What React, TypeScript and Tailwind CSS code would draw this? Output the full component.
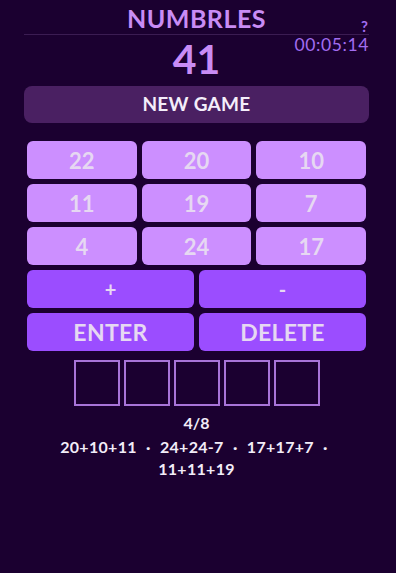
import React from "react";

const numbers = [22, 20, 10, 11, 19, 7, 4, 24, 17];
const solutions = ["20+10+11", "24+24-7", "17+17+7", "11+11+19"];

const App = () => {
    return (
        <main
            className="min-h-[573px] w-full bg-[#1b0030] text-white"
            style={{ fontFamily: "Lato, 'Open Sans', sans-serif" }}
        >
            <div className="ml-6 w-[345px] pt-[3px]">
                {/* header */}
                <div className="relative border-b border-[#3b1c52] pb-[1px]">
                    <h1 className="text-center text-[25px] font-bold leading-[30px] tracking-[0.5px] text-[#c98cf5]">
                        NUMBRLES
                    </h1>
                    <span className="absolute right-[1px] top-[15px] text-[15px] font-bold leading-4 text-[#a26df0]">?</span>
                </div>
                <div className="relative">
                    <div className="text-center text-[41px] font-bold leading-[48px] text-[#c98cf5]">41</div>
                    <span className="absolute right-0 top-[0px] text-[17.5px] leading-5 tracking-[0.6px] text-[#a26df0]">00:05:14</span>
                </div>
                <button className="mt-[3px] flex h-[37px] w-full items-center justify-center rounded-lg bg-[#4a2062] text-[19px] font-bold tracking-[0.3px] text-[#f4eefa]">
                    NEW GAME
                </button>

                {/* number tiles */}
                <div className="ml-[3px] mt-[18px] w-[339px]">
                    <div className="grid grid-cols-3 gap-x-[5px] gap-y-[5px]">
                        {numbers.map((n, i) => (
                            <button
                                key={i}
                                className="flex h-[38px] items-center justify-center rounded-[6px] bg-[#cc8fff] text-[22px] font-bold text-[#e6d8f2]"
                            >
                                {n}
                            </button>
                        ))}
                    </div>
                    <div className="mt-[5px] grid grid-cols-2 gap-[5px]">
                        <button className="flex h-[38px] items-center justify-center rounded-[6px] bg-[#9b4dff] text-[20px] font-bold text-[#e6d8f2]">+</button>
                        <button className="flex h-[38px] items-center justify-center rounded-[6px] bg-[#9b4dff] text-[20px] font-bold text-[#e6d8f2]">-</button>
                        <button className="flex h-[38px] items-center justify-center rounded-[6px] bg-[#9b4dff] text-[23px] font-bold tracking-[0.3px] text-[#e6d8f2]">ENTER</button>
                        <button className="flex h-[38px] items-center justify-center rounded-[6px] bg-[#9b4dff] text-[23px] font-bold tracking-[0.3px] text-[#e6d8f2]">DELETE</button>
                    </div>
                </div>

                {/* input boxes */}
                <div className="mt-[9px] flex justify-center gap-[4px]">
                    {[0, 1, 2, 3, 4].map((i) => (
                        <div key={i} className="h-[46px] w-[46px] border-2 border-[#a874d8]" />
                    ))}
                </div>

                <div className="mt-[7px] text-center text-[16px] font-bold leading-5 text-[#f2ecf8]">4/8</div>
                <div className="mx-auto mt-[3px] w-[300px] text-center text-[16px] font-bold leading-[22px] tracking-[0.3px] text-[#f2ecf8]">
                    {solutions.map((s, i) => (
                        <React.Fragment key={i}>
                            {s}
                            {i < solutions.length - 1 ? (
                                <>
                                    {" "}
                                    <span className="mx-[5px]">·</span>{" "}
                                </>
                            ) : null}
                        </React.Fragment>
                    ))}
                </div>
            </div>
        </main>
    );
};

export default App;
